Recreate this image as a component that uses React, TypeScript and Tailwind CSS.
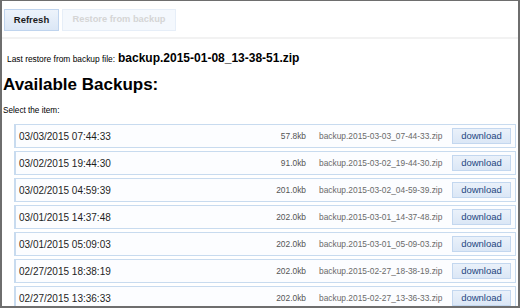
const backups = [
  { date: '03/03/2015 07:44:33', size: '57.8kb', file: 'backup.2015-03-03_07-44-33.zip' },
  { date: '03/02/2015 19:44:30', size: '91.0kb', file: 'backup.2015-03-02_19-44-30.zip' },
  { date: '03/02/2015 04:59:39', size: '201.0kb', file: 'backup.2015-03-02_04-59-39.zip' },
  { date: '03/01/2015 14:37:48', size: '202.0kb', file: 'backup.2015-03-01_14-37-48.zip' },
  { date: '03/01/2015 05:09:03', size: '202.0kb', file: 'backup.2015-03-01_05-09-03.zip' },
  { date: '02/27/2015 18:38:19', size: '202.0kb', file: 'backup.2015-02-27_18-38-19.zip' },
  { date: '02/27/2015 13:36:33', size: '202.0kb', file: 'backup.2015-02-27_13-36-33.zip' },
];

export default function App() {
  return (
    <div className="w-[520px] h-[308px] overflow-hidden bg-white border-t border-l-2 border-r-2 border-b-2 border-[#6e6e6e] font-['Liberation_Sans',Arial,sans-serif]">
      {/* Toolbar */}
      <div className="flex gap-[3px] pt-[8px] pl-[2px] pb-[6px] border-b-2 border-[#f2f2f2]">
        <button className="w-[55px] h-[22px] border border-[#bfd4ee] bg-gradient-to-b from-[#edf3fb] to-[#dbe7f6] text-[9.5px] font-bold text-[#1b1b1b]">
          Refresh
        </button>
        <button
          disabled
          className="w-[114px] h-[22px] border border-[#e6eef8] bg-[#f4f8fd] text-[9.3px] font-bold text-[#d5d5d5]"
        >
          Restore from backup
        </button>
      </div>

      <div className="px-[1px]">
        {/* Last restore */}
        <div className="mt-[13px] ml-[4px] h-[12px] leading-none flex items-baseline gap-[3px] text-black">
          <span className="text-[8.4px]">Last restore from backup file:</span>
          <span className="text-[12px] font-bold">backup.2015-01-08_13-38-51.zip</span>
        </div>

        <h1 className="mt-[12px] h-[17px] leading-none text-[17px] font-bold text-black">Available Backups:</h1>

        <div className="mt-[13px] h-[9px] leading-[9px] text-[8.2px] text-black">Select the item:</div>

        {/* List */}
        <div className="mt-[9px] ml-[11px] mr-[1px] flex flex-col gap-[3px]">
          {backups.map((b) => (
            <div
              key={b.file}
              className="flex items-center h-[24px] pl-[3px] pr-[4px] bg-[#fcfdff] border border-l-2 border-[#c8dbef]"
            >
              <span className="flex-1 text-[10px] text-[#1e1e1e]">{b.date}</span>
              <span className="w-[40px] text-right text-[8.4px] text-[#555]">{b.size}</span>
              <span className="ml-[13px] w-[120px] text-[8.4px] text-[#6a6a6a] whitespace-nowrap">{b.file}</span>
              <button className="ml-[13px] w-[59px] h-[16px] border border-[#c3d7ef] bg-gradient-to-b from-[#eaf1fa] to-[#dbe7f6] text-[9.5px] leading-none text-[#1f477f]">
                download
              </button>
            </div>
          ))}
        </div>
      </div>
    </div>
  );
}
